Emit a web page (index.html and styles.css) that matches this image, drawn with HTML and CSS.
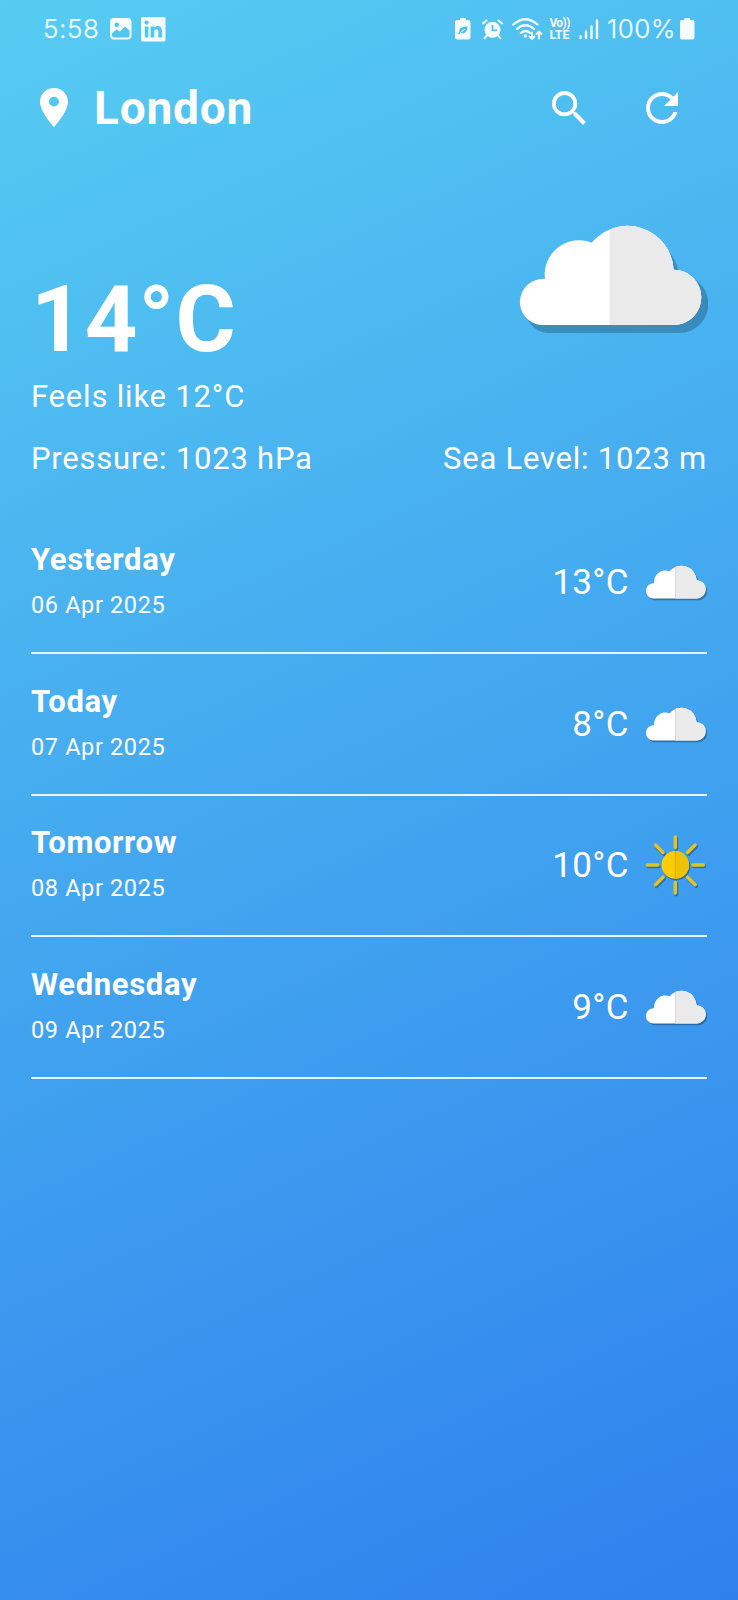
FILE: index.html
```
<!DOCTYPE html>
<html lang="en">
<head>
<meta charset="utf-8">
<title>Weather</title>
<link rel="stylesheet" href="styles.css">
</head>
<body>
<svg class="defs" width="0" height="0" aria-hidden="true">
  <clipPath id="right-half"><path d="M329 0H660V420H329Z"/></clipPath>
  <symbol id="cloud-small" viewBox="0 0 62 62">
    <path fill="#000" fill-opacity=".3" transform="translate(-4.200 11.300) scale(.11)" d="M123 345A69 69 0 1 1 135 207A103 103 0 0 1 275 98A139 139 0 0 1 521 179A83 83 0 0 1 521 345Z"/>
    <g transform="translate(-5.700 9.500) scale(.11)">
      <path fill="#fff" d="M123 345A69 69 0 1 1 135 207A103 103 0 0 1 275 98A139 139 0 0 1 521 179A83 83 0 0 1 521 345Z"/>
      <path fill="#eaeaea" clip-path="url(#right-half)" d="M123 345A69 69 0 1 1 135 207A103 103 0 0 1 275 98A139 139 0 0 1 521 179A83 83 0 0 1 521 345Z"/>
      <path stroke="#c9cdd0" stroke-width="6" d="M329 60V345"/>
    </g>
  </symbol>
  <symbol id="sun" viewBox="0 0 62 62">
    <g transform="translate(31.300 31.400)" opacity=".3">
      <circle r="14"/>
      <path stroke="#000" stroke-width="3.800" stroke-linecap="round" d="M0 -17.500V-28M0 17.500V28M-17.500 0H-28M17.500 0H28M-12.300 -12.300L-19.800 -19.800M12.300 12.300L19.800 19.800M-12.300 12.300L-19.800 19.800M12.300 -12.300L19.800 -19.800"/>
    </g>
    <g transform="translate(30.300 29.900)">
      <path stroke="#e2c31f" stroke-width="3.500" stroke-linecap="round" d="M0 -17.500V-28M0 17.500V28M-17.500 0H-28M17.500 0H28M-12.300 -12.300L-19.800 -19.800M12.300 12.300L19.800 19.800M-12.300 12.300L-19.800 19.800M12.300 -12.300L19.800 -19.800"/>
      <circle r="13.800" fill="#fdcc03"/>
      <path fill="#f0c205" d="M0 -13.800A13.800 13.800 0 0 1 0 13.800Z"/>
      <path stroke="#cfa60a" stroke-width=".8" d="M0 -13.800V13.800"/>
    </g>
  </symbol>
</svg>
<main class="screen">
  <div class="status">
    <span class="status-text clock">5:58</span>
    <svg class="ic-photo" width="22" height="22" viewBox="0 0 22 22"><rect width="21.500" height="21.500" rx="4" fill="#f3fcff"/><circle cx="6.800" cy="6.800" r="2.200" fill="#53c5f1"/><path fill="#53c5f1" d="M2 15.200L6.600 11.400L9.800 13.600L15 8.600L19.500 12.600V17.500Q19.500 19.500 17.500 19.500H4Q2 19.500 2 17.500Z"/></svg>
    <svg class="ic-in" width="25" height="25" viewBox="0 0 25 25"><rect width="24.500" height="24.500" rx="1.600" fill="#f3fcff"/><g fill="#53c5f1"><circle cx="5.600" cy="5.600" r="2.100"/><path d="M3.800 9.400H7.400V20.500H3.800ZM9.600 9.400H13V11C15 8 20.900 8.300 20.900 13.800V20.500H17.300V14.800C17.300 11.300 13.200 11.500 13.200 14.800V20.500H9.600Z"/></g></svg>
    <div class="spacer"></div>
    <svg class="ic-saver" width="16" height="22" viewBox="0 0 16 22"><path fill="#f3fcff" d="M5 0H11V2H13Q15.500 2 15.500 4.500V19Q15.500 21.500 13 21.500H2.500Q0 21.500 0 19V4.500Q0 2 2.500 2H5Z"/><path fill="#50bff0" d="M12.500 8.500C7 8.500 4 10 4.300 13.500L3 16L4 16.500L5.300 15C10.500 16.500 12.500 13 12.500 8.500Z"/><path stroke="#f3fcff" d="M5.500 14.500L10 11" fill="none"/></svg>
    <svg class="ic-alarm" width="21" height="21" viewBox="0 0 21 21"><circle cx="10.500" cy="10.800" r="8" fill="#f3fcff"/><path fill="none" stroke="#f3fcff" stroke-width="2" stroke-linecap="round" d="M1 4.500L4.500 1.500M20 4.500L16.500 1.500M4.500 17L2.500 19.300M16.500 17L18.500 19.300"/><path fill="none" stroke="#50bff0" stroke-width="1.800" d="M10.500 6V11.300H15"/></svg>
    <svg class="ic-wifi" width="31" height="23" viewBox="0 0 31 23"><g fill="none" stroke="#f3fcff" stroke-width="2.300" stroke-linecap="round"><path d="M1.300 6.500Q13.500 -4 25.500 6.500M5 11Q13.500 3.500 22 11M9 15Q13.500 11 18 15"/><path stroke-width="1.900" d="M20 14.500V20.500M17.500 18.500L20 21L22.500 18.500M27 20.500V14M24.500 16L27 13.500L29.500 16"/></g><circle cx="13.300" cy="18" r="1.700" fill="#f3fcff"/></svg>
    <div class="volte"><span class="vo">Vo))</span><span>LTE</span></div>
    <svg class="ic-signal" width="20" height="21" viewBox="0 0 20 21"><path fill="none" stroke="#f3fcff" stroke-width="2.400" stroke-linecap="round" d="M1.500 17.500V19M7 12.500V19M12.500 7.500V19M18 1.500V19"/></svg>
    <span class="status-text percent">100%</span>
    <svg class="ic-batt" width="15" height="22" viewBox="0 0 15 22"><path fill="#f3fcff" d="M4.500 0H10V2H12.500Q14.500 2 14.500 4V19.500Q14.500 21.500 12.500 21.500H2Q0 21.500 0 19.500V4Q0 2 2 2H4.500Z"/></svg>
  </div>

  <header class="header">
    <svg class="pin" width="28" height="39" viewBox="0 0 14 20" preserveAspectRatio="none"><path fill="#fff" d="M7 0C3.130 0 0 3.130 0 7c0 5.250 7 13 7 13s7-7.750 7-13c0-3.870-3.130-7-7-7zm0 9.500a2.500 2.500 0 1 1 0-5 2.500 2.500 0 0 1 0 5z"/></svg>
    <h1 class="city">London</h1>
    <div class="spacer"></div>
    <svg class="search" width="34" height="34" viewBox="3 3 17.500 17.500"><path fill="#fff" d="M15.500 14h-.79l-.28-.27C15.410 12.590 16 11.110 16 9.500 16 5.910 13.090 3 9.500 3S3 5.910 3 9.500 5.910 16 9.500 16c1.610 0 3.090-.59 4.230-1.570l.27.28v.79l5 4.990L20.490 19l-4.990-5zm-6 0C7.010 14 5 11.990 5 9.500S7.010 5 9.500 5 14 7.010 14 9.500 11.990 14 9.500 14z"/></svg>
    <svg class="refresh" width="32" height="32" viewBox="4 4 16 16"><path fill="#fff" d="M17.650 6.350C16.200 4.900 14.210 4 12 4c-4.420 0-7.990 3.580-7.990 8s3.570 8 7.990 8c3.730 0 6.840-2.550 7.730-6h-2.080c-.82 2.330-3.040 4-5.650 4-3.310 0-6-2.690-6-6s2.690-6 6-6c1.660 0 3.140.69 4.220 1.780L13 11h7V4l-2.350 2.350z"/></svg>
  </header>

  <section class="hero">
    <div>
      <div class="temp">14°C</div>
      <div class="feels">Feels like 12°C</div>
    </div>
    <svg class="cloud" width="190" height="110" viewBox="54 42 570 330">
      <path fill="#000" fill-opacity=".22" d="M141 369A69 69 0 1 1 153 231A103 103 0 0 1 293 122A139 139 0 0 1 537 195A83 83 0 0 1 539 369Z"/>
      <path fill="#fff" d="M123 345A69 69 0 1 1 135 207A103 103 0 0 1 275 98A139 139 0 0 1 521 179A83 83 0 0 1 521 345Z"/>
      <path fill="#eaeaea" clip-path="url(#right-half)" d="M123 345A69 69 0 1 1 135 207A103 103 0 0 1 275 98A139 139 0 0 1 521 179A83 83 0 0 1 521 345Z"/>
    </svg>
  </section>

  <div class="details"><span>Pressure: 1023 hPa</span><span>Sea Level: 1023 m</span></div>

  <ul class="days">
    <li class="day">
      <div><div class="name">Yesterday</div><div class="date">06 Apr 2025</div></div>
      <div class="reading"><span>13°C</span><svg width="62" height="62"><use href="#cloud-small"/></svg></div>
    </li>
    <li class="day">
      <div><div class="name">Today</div><div class="date">07 Apr 2025</div></div>
      <div class="reading"><span>8°C</span><svg width="62" height="62"><use href="#cloud-small"/></svg></div>
    </li>
    <li class="day">
      <div><div class="name">Tomorrow</div><div class="date">08 Apr 2025</div></div>
      <div class="reading"><span>10°C</span><svg width="62" height="62"><use href="#sun"/></svg></div>
    </li>
    <li class="day">
      <div><div class="name">Wednesday</div><div class="date">09 Apr 2025</div></div>
      <div class="reading"><span>9°C</span><svg width="62" height="62"><use href="#cloud-small"/></svg></div>
    </li>
  </ul>
</main>
</body>
</html>
```

FILE: styles.css
```
body { margin: 0; }
.defs { display: block; }
.screen {
  box-sizing: border-box;
  width: 738px;
  height: 1600px;
  overflow: hidden;
  padding: 0 31px;
  color: #fff;
  font-family: Roboto, sans-serif;
  letter-spacing: .8px;
  background: linear-gradient(155.24deg, #56ccf2, #2f80ed);
}
.screen svg { display: block; flex: none; }
.spacer { flex: 1; }
.status { display: flex; align-items: center; height: 58px; padding: 0 12px; color: #f3fcff; }
.status-text { font-family: Inter, sans-serif; font-size: 26px; font-weight: 300; letter-spacing: .6px; line-height: 60px; white-space: nowrap; -webkit-text-stroke: .25px #f3fcff; }
.ic-photo { margin-left: 11px; }
.ic-in { margin-left: 9px; }
.ic-alarm { margin-left: 11px; }
.ic-wifi { margin-left: 9px; }
.volte { display: flex; flex-direction: column; margin-left: 6px; width: 22px; font-size: 12.5px; font-weight: 700; line-height: 11px; letter-spacing: 0; }
.vo { font-size: 12px; letter-spacing: -.6px; }
.ic-signal { margin-left: 8px; }
.percent { margin-left: 7.5px; }
.ic-batt { margin-left: 4px; }
.header { display: flex; align-items: center; height: 99px; padding: 0 29.5px 0 9px; }
.city { margin: 1px 0 0 26px; font-size: 46px; line-height: 99px; font-weight: 700; }
.refresh { margin-left: 60px; }
.hero { display: flex; justify-content: space-between; height: 261px; }
.temp { margin-top: 108px; font-size: 92px; line-height: 110px; font-weight: 700; letter-spacing: 1px; }
.feels { font-size: 31px; line-height: 44px; }
.cloud { margin: 67px -.6px 0 0; }
.details { display: flex; justify-content: space-between; margin-top: 22px; font-size: 31px; line-height: 37px; letter-spacing: .77px; }
.days { list-style: none; margin: 35.6px 0 0; padding: 0; }
.day { box-sizing: border-box; display: flex; justify-content: space-between; align-items: center; height: 141.6px; border-bottom: 2px solid #e9f5fd; }
.name { padding-top: .5px; font-size: 31px; line-height: 46px; font-weight: 700; letter-spacing: .65px; }
.date { font-size: 23.5px; line-height: 45px; letter-spacing: .63px; }
.reading { display: flex; align-items: center; gap: 16px; font-size: 35px; line-height: 46px; letter-spacing: .4px; }
.reading span { padding-top: 1.5px; }
```
